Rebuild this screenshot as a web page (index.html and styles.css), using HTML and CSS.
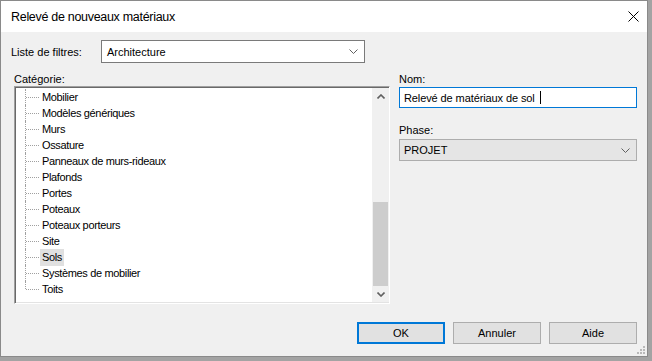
FILE: index.html
```html
<!DOCTYPE html>
<html lang="fr">
<head>
    <meta charset="UTF-8">
    <title>Relevé de nouveaux matériaux</title>
    <link rel="stylesheet" href="styles.css">
</head>
<body>
    <div class="dialog">
        <div class="titlebar">
            <span class="title">Relevé de nouveaux matériaux</span>
            <svg class="close" width="11" height="11" viewBox="0 0 11 11">
                <path d="M0.5 0.5 L10.5 10.5 M10.5 0.5 L0.5 10.5" stroke="#000" stroke-width="1" fill="none"/>
            </svg>
        </div>

        <div class="content">
            <div class="filter-row">
                <span class="filter-label">Liste de filtres:</span>
                <div class="combo combo-white">
                    <span>Architecture</span>
                    <svg class="chevron" width="9" height="5" viewBox="0 0 9 5">
                        <path d="M0.5 0.5 L4.5 4.5 L8.5 0.5" stroke="#606060" fill="none"/>
                    </svg>
                </div>
            </div>

            <div class="columns">
                <div class="col-left">
                    <div class="label">Catégorie:</div>
                    <div class="listbox">
                        <ul class="tree">
                            <li><span>Mobilier</span></li>
                            <li><span>Modèles génériques</span></li>
                            <li><span>Murs</span></li>
                            <li><span>Ossature</span></li>
                            <li><span>Panneaux de murs-rideaux</span></li>
                            <li><span>Plafonds</span></li>
                            <li><span>Portes</span></li>
                            <li><span>Poteaux</span></li>
                            <li><span>Poteaux porteurs</span></li>
                            <li><span>Site</span></li>
                            <li class="selected"><span>Sols</span></li>
                            <li><span>Systèmes de mobilier</span></li>
                            <li class="last"><span>Toits</span></li>
                        </ul>
                        <div class="scrollbar">
                            <div class="sb-btn">
                                <svg width="8" height="5" viewBox="0 0 8 5">
                                    <path d="M0.5 4.5 L4 1 L7.5 4.5" stroke="#606060" stroke-width="1.6" fill="none"/>
                                </svg>
                            </div>
                            <div class="sb-track"><div class="sb-thumb"></div></div>
                            <div class="sb-btn">
                                <svg width="8" height="5" viewBox="0 0 8 5">
                                    <path d="M0.5 0.5 L4 4 L7.5 0.5" stroke="#606060" stroke-width="1.6" fill="none"/>
                                </svg>
                            </div>
                        </div>
                    </div>
                </div>

                <div class="col-right">
                    <div class="label">Nom:</div>
                    <div class="textbox">Relevé de matériaux de sol<span class="caret"></span></div>
                    <div class="label phase-label">Phase:</div>
                    <div class="combo combo-gray">
                        <span>PROJET</span>
                        <svg class="chevron" width="9" height="5" viewBox="0 0 9 5">
                            <path d="M0.5 0.5 L4.5 4.5 L8.5 0.5" stroke="#606060" fill="none"/>
                        </svg>
                    </div>
                </div>
            </div>

            <div class="buttons">
                <button class="btn btn-default">OK</button>
                <button class="btn">Annuler</button>
                <button class="btn">Aide</button>
            </div>
        </div>

        <svg class="grip" width="9" height="9" viewBox="0 0 9 9">
            <rect x="6" y="0" width="2" height="2" fill="#b9b9b9"/>
            <rect x="3" y="3" width="2" height="2" fill="#b9b9b9"/>
            <rect x="6" y="3" width="2" height="2" fill="#b9b9b9"/>
            <rect x="0" y="6" width="2" height="2" fill="#b9b9b9"/>
            <rect x="3" y="6" width="2" height="2" fill="#b9b9b9"/>
            <rect x="6" y="6" width="2" height="2" fill="#b9b9b9"/>
        </svg>
    </div>
</body>
</html>
```

FILE: styles.css
```css
* {
    margin: 0;
    padding: 0;
    box-sizing: border-box;
}

body {
    font-family: "Liberation Sans", Arial, sans-serif;
    font-size: 11px;
    color: #000;
    background-color: #a3a3a3;
    width: 652px;
    height: 361px;
    overflow: hidden;
}

.dialog {
    position: relative;
    width: 648px;
    height: 357px;
    background: #f0f0f0;
    border: 1px solid #8a8a8a;
    display: flex;
    flex-direction: column;
}

.titlebar {
    height: 31px;
    background: #fff;
    display: flex;
    align-items: center;
    justify-content: space-between;
    padding: 0 8px 0 10px;
    flex-shrink: 0;
}

.title {
    font-size: 12.5px;
    letter-spacing: -0.3px;
}

.close {
    display: block;
}

.content {
    flex: 1;
    display: flex;
    flex-direction: column;
    padding: 8px 10px 0 10px;
}

.filter-row {
    display: flex;
    align-items: center;
    height: 23px;
}

.filter-label {
    width: 90px;
}

.combo {
    display: flex;
    align-items: center;
    justify-content: space-between;
    height: 23px;
    padding: 0 6px 0 5px;
}

.combo-white {
    width: 264px;
    background: #fff;
    border: 1px solid #7a7a7a;
}

.combo-gray {
    width: 238px;
    height: 22px;
    margin-top: 2px;
    background: #e5e5e5;
    border: 1px solid #adadad;
    padding-left: 4px;
}

.columns {
    display: flex;
    gap: 9px;
    margin-top: 10px;
    padding-left: 3px;
}

.label {
    height: 13px;
    line-height: 13px;
}

.col-left {
    width: 377px;
}

.listbox {
    height: 218px;
    display: flex;
    background: #fff;
    border-top: 1px solid #a0a0a0;
    border-left: 1px solid #a0a0a0;
    border-right: 1px solid #fff;
    border-bottom: 1px solid #fff;
    box-shadow: inset 1px 1px 0 #696969, inset -1px -1px 0 #e3e3e3;
    padding: 1px 0 1px 1px;
}

.tree {
    flex: 1;
    list-style: none;
    padding-left: 9px;
    padding-top: 1px;
    letter-spacing: -0.35px;
}

.tree li {
    height: 16px;
    display: flex;
    align-items: center;
    border-left: 1px dotted #a0a0a0;
}

.tree li.last {
    border-left: none;
    position: relative;
    padding-left: 1px;
}

.tree li.last::after {
    content: "";
    position: absolute;
    left: 0;
    top: 0;
    height: 8px;
    border-left: 1px dotted #a0a0a0;
}

.tree li::before {
    content: "";
    width: 13px;
    border-top: 1px dotted #a0a0a0;
    margin-right: 3px;
    flex-shrink: 0;
}

.tree li span {
    padding: 1px 2px;
    margin-left: -2px;
    line-height: 15px;
}

.tree li.selected span {
    background: #e0e0e0;
}

.scrollbar {
    width: 17px;
    display: flex;
    flex-direction: column;
    background: #f0f0f0;
}

.sb-btn {
    height: 16px;
    display: flex;
    align-items: center;
    justify-content: center;
}

.sb-btn svg {
    display: block;
}

.sb-track {
    flex: 1;
    padding-top: 98px;
}

.sb-thumb {
    height: 84px;
    margin: 0 1px;
    background: #cdcdcd;
}

.col-right {
    width: 238px;
}

.textbox {
    height: 21px;
    margin-top: 1px;
    background: #fff;
    border: 1px solid #0078d7;
    padding: 0 4px;
    display: flex;
    align-items: center;
    letter-spacing: -0.1px;
}

.caret {
    width: 1px;
    height: 13px;
    background: #000;
    margin-left: 5px;
}

.phase-label {
    margin-top: 16px;
}

.chevron {
    display: block;
}

.buttons {
    display: flex;
    justify-content: flex-end;
    gap: 8px;
    margin-top: 18px;
}

.btn {
    width: 88px;
    height: 22px;
    font-family: "Liberation Sans", Arial, sans-serif;
    font-size: 11px;
    color: #000;
    background: #e1e1e1;
    border: 1px solid #adadad;
}

.btn-default {
    border: 2px solid #0078d7;
}

.grip {
    position: absolute;
    right: 1px;
    bottom: 1px;
}
```
